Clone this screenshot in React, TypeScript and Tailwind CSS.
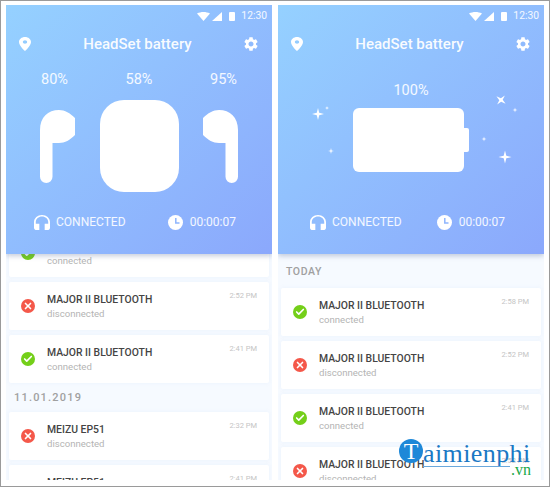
import { Check, X } from 'lucide-react'

type Row = { name: string; time: string; ok: boolean }

function StatusIcon({ ok }: { ok: boolean }) {
  return (
    <span
      className={`flex h-[14px] w-[14px] shrink-0 items-center justify-center rounded-full ${ok ? 'bg-[#74cf19]' : 'bg-[#f4584a]'}`}
    >
      {ok ? (
        <Check size={10} strokeWidth={4} className="text-white" />
      ) : (
        <X size={10} strokeWidth={4} className="text-white" />
      )}
    </span>
  )
}

function Card({ row }: { row: Row }) {
  return (
    <div className="flex h-[48px] shrink-0 items-center rounded-[2px] bg-white px-[12px] shadow-[0_0_4px_rgba(150,180,230,0.12)]">
      <StatusIcon ok={row.ok} />
      <div className="ml-[12px] mt-[1px] flex-1">
        <div className="text-[10.4px] leading-[14px] font-medium text-[#444]">{row.name}</div>
        <div className="text-[9.6px] leading-[14px] text-[#b4b4b4]">{row.ok ? 'connected' : 'disconnected'}</div>
      </div>
      <div className="mb-[20px] text-[7.5px] text-[#c4c4c4]">{row.time}</div>
    </div>
  )
}

function StatusBar() {
  return (
    <div className="flex h-[20px] items-center justify-end pr-[5px] pt-[3px]">
      <svg width="13" height="9" viewBox="0 0 13 9">
        <path d="M0 1.500C4 -0.500 9 -0.500 13 1.500L6.500 9Z" fill="#fff" />
      </svg>
      <svg width="10" height="9" viewBox="0 0 10 9" className="ml-[2px]">
        <path d="M10 0V9H0Z" fill="#fff" />
      </svg>
      <span className="ml-[7px] h-[9px] w-[6px] rounded-[1px] bg-white" />
      <span className="ml-[6px] text-[10.3px] leading-none text-white/90">12:30</span>
    </div>
  )
}

function TitleBar() {
  return (
    <div className="mt-[9px] flex h-[20px] items-center justify-between pl-[13px] pr-[14px]">
      <svg width="12" height="14" viewBox="5 2 14 20" preserveAspectRatio="none">
        <path
          d="M12 2C8.130 2 5 5.130 5 9c0 5.250 7 13 7 13s7-7.750 7-13c0-3.870-3.130-7-7-7zm0 9.500c-1.380 0-2.500-1.120-2.500-2.500s1.120-2.500 2.500-2.500 2.500 1.120 2.500 2.500-1.120 2.500-2.500 2.500z"
          fill="#fff"
        />
      </svg>
      <span className="text-[15px] font-medium text-white/95">HeadSet battery</span>
      <svg width="14" height="14" viewBox="2 2 20 20">
        <path
          d="M19.140 12.940c.04-.3.06-.61.06-.94 0-.32-.02-.64-.07-.94l2.030-1.580c.18-.14.23-.41.12-.61l-1.920-3.320c-.12-.22-.37-.29-.59-.22l-2.390.96c-.5-.38-1.030-.7-1.620-.94l-.36-2.540c-.04-.24-.24-.41-.48-.41h-3.840c-.24 0-.43.17-.47.41l-.36 2.540c-.59.24-1.130.57-1.620.94l-2.390-.96c-.22-.08-.47 0-.59.22L2.740 8.870c-.12.21-.08.47.12.61l2.030 1.580c-.05.3-.09.63-.09.94s.02.64.07.94l-2.030 1.580c-.18.14-.23.41-.12.61l1.920 3.320c.12.22.37.29.59.22l2.390-.96c.5.38 1.030.7 1.620.94l.36 2.540c.05.24.24.41.48.41h3.840c.24 0 .44-.17.47-.41l.36-2.540c.59-.24 1.130-.56 1.620-.94l2.390.96c.22.08.47 0 .59-.22l1.920-3.320c.12-.22.07-.47-.12-.61l-2.010-1.580zM12 15.600c-1.980 0-3.600-1.620-3.600-3.600s1.620-3.600 3.600-3.600 3.600 1.620 3.600 3.600-1.620 3.600-3.600 3.600z"
          fill="#fff"
        />
      </svg>
    </div>
  )
}

function Header({ children }: { children: React.ReactNode }) {
  return (
    <div className="relative z-10 flex h-[249px] shrink-0 flex-col bg-gradient-to-br from-[#95d1ff] to-[#8ba8fc] text-white shadow-[0_2px_5px_rgba(90,110,150,0.35)]">
      <StatusBar />
      <TitleBar />
      {children}
    </div>
  )
}

// pl and gap differ a little between the two phones in the picture
function Footer({ className }: { className: string }) {
  return (
    <div className={`flex h-[16px] items-center text-[12px] text-white/90 ${className}`}>
      <svg width="16" height="15" viewBox="3 1 18 19" preserveAspectRatio="none">
        <path
          d="M12 1c-4.970 0-9 4.030-9 9v7c0 1.660 1.340 3 3 3h3v-8H5v-2c0-3.870 3.130-7 7-7s7 3.130 7 7v2h-4v8h3c1.660 0 3-1.340 3-3v-7c0-4.970-4.030-9-9-9z"
          fill="#fff"
        />
      </svg>
      <span className="ml-[6px]">CONNECTED</span>
      <span className="ml-auto flex items-center">
        <svg width="15" height="15" viewBox="0 0 15 15">
          <circle cx="7.500" cy="7.500" r="7.500" fill="#fff" />
          <path d="M7.800 3V8H11.500" fill="none" stroke="#8fb5fd" strokeWidth="1.500" />
        </svg>
        <span className="ml-[7px]">00:00:07</span>
      </span>
    </div>
  )
}

function Bud({ flip }: { flip?: boolean }) {
  return (
    <svg width="35" height="73" viewBox="0 0 35 73" className={flip ? '-scale-x-100' : ''}>
      <path
        d="M0 20C0 7 8 0 19 0C25 0 30 3 35 8V25C30 30 25 33 19 33H12.500V66.750A6.250 6.250 0 0 1 0 66.750Z"
        fill="#fff"
      />
    </svg>
  )
}

function Spark({ x, y, r, rotate }: { x: number; y: number; r: number; rotate?: number }) {
  const k = r * 0.2
  return (
    <path
      d={`M0 ${-r}L${k} ${-k}L${r} 0L${k} ${k}L0 ${r}L${-k} ${k}L${-r} 0L${-k} ${-k}Z`}
      transform={`translate(${x} ${y}) rotate(${rotate ?? 0})`}
      fill="#fff"
    />
  )
}

function Battery() {
  return (
    <svg width="266" height="80" viewBox="0 0 266 80" className="-mt-[6px]">
      <rect x="75" y="13" width="111" height="64" rx="6" fill="#fff" />
      <rect x="180" y="33" width="11" height="24" rx="2" fill="#fff" />
      <Spark x={40} y={19} r={6} />
      <Spark x={49} y={13} r={2} />
      <Spark x={53} y={56} r={3} />
      <Spark x={223} y={5} r={6} rotate={40} />
      <Spark x={237} y={15} r={2.500} />
      <Spark x={206} y={44} r={2.500} />
      <Spark x={227} y={62} r={6.500} />
    </svg>
  )
}

function DateLabel({ children, className }: { children: React.ReactNode; className: string }) {
  return (
    <div className={`h-[19px] pl-[5px] leading-[19px] font-medium text-[#a0a0a0] ${className}`}>
      {children}
    </div>
  )
}

const major = 'MAJOR II BLUETOOTH'
const meizu = 'MEIZU EP51'

export default function App() {
  return (
    <div className="relative flex h-[487px] w-[550px] justify-between border border-[#9a9a9a] bg-white px-[5px] pt-[4px] font-['Roboto',sans-serif]">
      <div className="flex h-[475px] w-[266px] flex-col overflow-hidden bg-[#f6faff]">
        <Header>
          <div className="mt-[16px] flex h-[20px] items-center justify-between px-[35px] text-[14.5px] text-white/90">
            <span>80%</span>
            <span>58%</span>
            <span>95%</span>
          </div>
          <div className="mt-[10px] flex items-start justify-between px-[34px]">
            <div className="mt-[10px]"><Bud /></div>
            <div className="h-[92px] w-[79px] rounded-[24px] bg-white" />
            <div className="mt-[10px]"><Bud flip /></div>
          </div>
          <Footer className="mt-[22px] pl-[28px] pr-[36px]" />
        </Header>
        <div className="-mt-[25px] flex flex-col gap-[5px] px-[3px]">
          <Card row={{ name: major, time: '2:58 PM', ok: true }} />
          <Card row={{ name: major, time: '2:52 PM', ok: false }} />
          <Card row={{ name: major, time: '2:41 PM', ok: true }} />
          <DateLabel className="text-[11px] tracking-[1.2px]">11.01.2019</DateLabel>
          <Card row={{ name: meizu, time: '2:32 PM', ok: false }} />
          <Card row={{ name: meizu, time: '2:41 PM', ok: true }} />
        </div>
      </div>

      <div className="flex h-[475px] w-[266px] flex-col overflow-hidden bg-[#f6faff]">
        <Header>
          <div className="mt-[27px] h-[20px] text-center text-[14.5px] leading-[20px] text-white/90">100%</div>
          <Battery />
          <Footer className="mt-[39px] pl-[32px] pr-[39px]" />
        </Header>
        <div className="flex flex-col gap-[5px] px-[3px] pt-[8px]">
          <div className="mb-[2px]">
            <DateLabel className="text-[10.5px] tracking-[0.6px]">TODAY</DateLabel>
          </div>
          <Card row={{ name: major, time: '2:58 PM', ok: true }} />
          <Card row={{ name: major, time: '2:52 PM', ok: false }} />
          <Card row={{ name: major, time: '2:41 PM', ok: true }} />
          <Card row={{ name: major, time: '2:52 PM', ok: false }} />
        </div>
      </div>

      {/* watermark over the right phone */}
      <div className="absolute left-[398px] top-[438px] z-20 flex font-['Liberation_Serif',serif]">
        <span className="flex h-[24px] w-[24px] items-center justify-center rounded-full bg-[#1e88d8] text-[24px] leading-none text-white">
          T
        </span>
        <div className="relative w-[108px]">
          <span className="mt-[2px] block text-[26px] leading-[26px] tracking-[0.4px] text-[#1a78c4]">aimienphi</span>
          <span className="absolute bottom-0 left-0 h-[1px] w-[87px] bg-[#6aa8dc]" />
          <span className="absolute right-0 top-[24px] text-[16px] leading-[14px] text-[#18a848]">.vn</span>
        </div>
      </div>
    </div>
  )
}
